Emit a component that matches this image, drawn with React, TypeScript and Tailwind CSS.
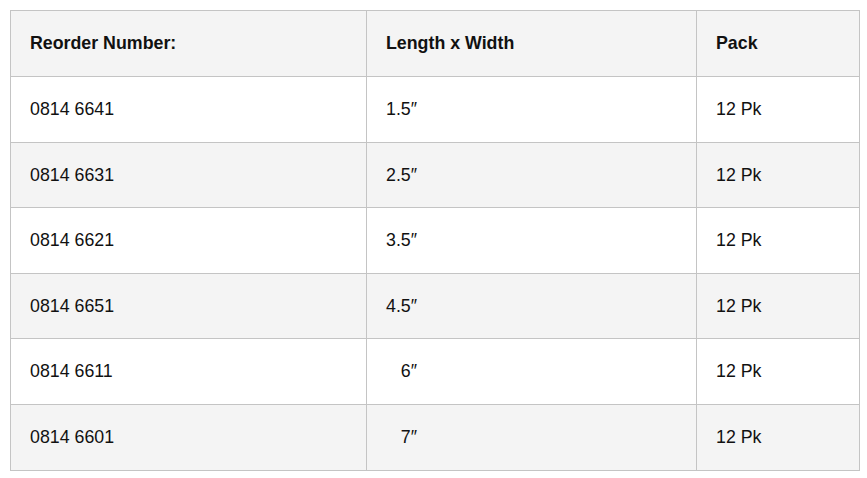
const rows = [
  { code: '0814 6641', size: '1.5″', pack: '12 Pk' },
  { code: '0814 6631', size: '2.5″', pack: '12 Pk' },
  { code: '0814 6621', size: '3.5″', pack: '12 Pk' },
  { code: '0814 6651', size: '4.5″', pack: '12 Pk' },
  { code: '0814 6611', size: '\u00a0\u00a0\u00a06″', pack: '12 Pk' },
  { code: '0814 6601', size: '\u00a0\u00a0\u00a07″', pack: '12 Pk' },
];

export default function App() {
  return (
    <div className="min-h-screen bg-white p-[10px] font-['Liberation_Sans',Arial,sans-serif] text-[17.8px] text-[#111]">
      <table className="w-[850px] border-collapse">
        <thead>
          <tr className="h-[66px] bg-[#f4f4f4]">
            <th className="w-[356px] border border-[#c4c4c4] pl-[19px] pr-5 text-left font-bold">Reorder Number:</th>
            <th className="w-[330px] border border-[#c4c4c4] pl-[19px] pr-5 text-left font-bold">Length x Width</th>
            <th className="border border-[#c4c4c4] pl-[19px] pr-5 text-left font-bold">Pack</th>
          </tr>
        </thead>
        <tbody>
          {rows.map((r, i) => (
            <tr key={r.code} className={i % 2 === 1 ? 'h-[65.6px] bg-[#f4f4f4]' : 'h-[65.6px] bg-white'}>
              <td className="border border-[#c4c4c4] pl-[19px] pr-5">{r.code}</td>
              <td className="border border-[#c4c4c4] pl-[19px] pr-5">{r.size}</td>
              <td className="border border-[#c4c4c4] pl-[19px] pr-5">{r.pack}</td>
            </tr>
          ))}
        </tbody>
      </table>
    </div>
  );
}
